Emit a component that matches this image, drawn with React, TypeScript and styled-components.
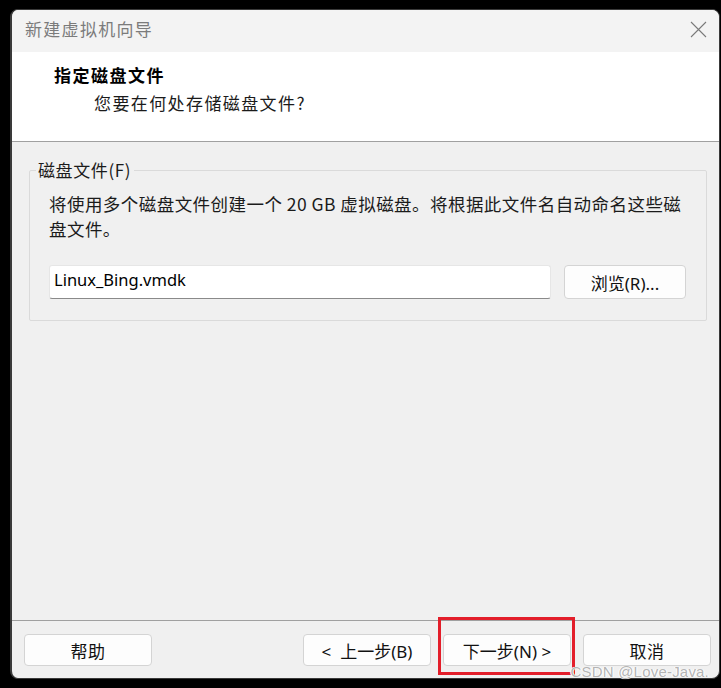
import React from "react";
import styled, { createGlobalStyle } from "styled-components";

const Global = createGlobalStyle`
  html, body { margin: 0; padding: 0; background: #000; }
  body {
    width: 721px; height: 688px; overflow: hidden;
    font-family: "Segoe UI", "Noto Sans", "Noto Sans CJK SC", sans-serif;
    color: #1b1b1b;
  }
`;

const Page = styled.div`
  position: relative;
  width: 721px;
  height: 688px;
  box-sizing: border-box;
  padding: 9px 1px 9px 10px;
  display: flex;
  background: #000;
`;

const Window = styled.div`
  flex: 1;
  display: flex;
  flex-direction: column;
  border: 1px solid #3a3a3a;
  border-left-width: 2px;
  border-radius: 8px;
  overflow: hidden;
  background: #f0f0f0;
`;

const TitleBar = styled.div`
  height: 42px;
  flex: none;
  box-sizing: border-box;
  display: flex;
  align-items: center;
  justify-content: space-between;
  padding: 0 12px 5px 13px;
  background: #f3f3f3;
`;

const TitleText = styled.span`
  font-family: "Noto Sans CJK SC", sans-serif;
  font-size: 17px;
  color: #7b7b7b;
  letter-spacing: 1.3px;
`;

const CloseIcon = styled.svg`
  width: 17px;
  height: 17px;
  margin-top: 2px;
`;

const Header = styled.div`
  flex: none;
  height: 90px;
  box-sizing: border-box;
  padding: 11px 0 0 42px;
  background: #fff;
  border-bottom: 1px solid #a0a0a0;
  display: flex;
  flex-direction: column;
  gap: 4px;
`;

const HeaderTitle = styled.div`
  font-family: "Noto Sans CJK SC", sans-serif;
  font-weight: 700;
  font-size: 17px;
  line-height: 24px;
  color: #000;
  letter-spacing: 1.5px;
`;

const HeaderSub = styled.div`
  font-family: "Noto Sans CJK SC", sans-serif;
  font-size: 17px;
  line-height: 24px;
  padding-left: 40px;
  color: #1b1b1b;
  letter-spacing: 1.4px;
`;

const Body = styled.div`
  flex: 1;
  padding: 16px 12px 0 17px;
`;

const Group = styled.fieldset`
  margin: 0;
  padding: 0;
  border: 1px solid #dadada;
  border-radius: 2px;
  min-width: 0;
`;

const Legend = styled.legend`
  margin-left: 6px;
  padding: 0 3px 0 2px;
  font-size: 17px;
  line-height: 24px;
  color: #1b1b1b;
  font-family: "Noto Sans CJK SC", sans-serif;
  letter-spacing: 0.6px;
`;

const GroupInner = styled.div`
  padding: 9px 20px 21px 19px;
`;

const Desc = styled.p`
  margin: 0;
  font-family: "Noto Sans CJK SC", sans-serif;
  font-size: 17.5px;
  line-height: 25px;
  color: #1b1b1b;
  letter-spacing: 0.45px;
`;

const FileRow = styled.div`
  margin-top: 24px;
  display: flex;
  gap: 13px;
`;

const FileInput = styled.div`
  flex: 1;
  height: 34px;
  box-sizing: border-box;
  background: #fff;
  border: 1px solid #e6e6e6;
  border-bottom: 1px solid #8a8a8a;
  border-radius: 3px;
  padding: 0 4px 6px;
  display: flex;
  align-items: center;
  font-family: "Noto Sans", sans-serif;
  font-size: 16.5px;
  color: #000;
`;

const Button = styled.div<{ $w?: number }>`
  width: ${(p) => p.$w ?? 128}px;
  height: ${(p) => (p.$w ? 34 : 32)}px;
  box-sizing: border-box;
  background: #fdfdfd;
  border: 1px solid #d4d4d4;
  border-radius: 4px;
  display: flex;
  align-items: center;
  justify-content: center;
  font-family: "Noto Sans", "Noto Sans CJK SC", sans-serif;
  font-size: 17px;
  color: #111;
  flex: none;
`;

const Cjk = styled.span`
  font-family: "Noto Sans CJK SC", sans-serif;
  letter-spacing: 0.5px;
`;

const Footer = styled.div`
  flex: none;
  height: 58px;
  box-sizing: border-box;
  border-top: 1px solid #a0a0a0;
  padding: 13px 8px 0 12px;
  display: flex;
  align-items: flex-start;
  gap: 12px;
`;

const Spacer = styled.div`
  flex: 1;
`;

const Highlight = styled.div`
  position: relative;
`;

const RedBox = styled.span`
  position: absolute;
  top: -17px;
  left: -5px;
  right: -4px;
  bottom: -9px;
  border: 3px solid #e31e2a;
  pointer-events: none;
`;

const Watermark = styled.span`
  position: absolute;
  right: 12px;
  bottom: 8px;
  font-family: "Liberation Sans", Arial, sans-serif;
  font-size: 15px;
  color: #b4b4b4;
  letter-spacing: 0.2px;
  text-shadow: 0 0 1px #fff, 1px 0 0 #fff, -1px 0 0 #fff;
`;

export default function App() {
  return (
    <Page>
      <Global />
      <Window>
        <TitleBar>
          <TitleText>新建虚拟机向导</TitleText>
          <CloseIcon viewBox="0 0 17 17">
            <path d="M1 1 L16 16 M16 1 L1 16" stroke="#7a7a7a" strokeWidth="1.1" fill="none" />
          </CloseIcon>
        </TitleBar>
        <Header>
          <HeaderTitle>指定磁盘文件</HeaderTitle>
          <HeaderSub>您要在何处存储磁盘文件?</HeaderSub>
        </Header>
        <Body>
          <Group>
            <Legend>磁盘文件(F)</Legend>
            <GroupInner>
              <Desc>
                将使用多个磁盘文件创建一个 20 GB 虚拟磁盘。将根据此文件名自动命名这些磁盘文件。
              </Desc>
              <FileRow>
                <FileInput>Linux_Bing.vmdk</FileInput>
                <Button $w={122}>浏览(R)...</Button>
              </FileRow>
            </GroupInner>
          </Group>
        </Body>
        <Footer>
          <Button>
            <Cjk>帮助</Cjk>
          </Button>
          <Spacer />
          <Button>&lt;&nbsp; 上一步(B)</Button>
          <Highlight>
            <Button>下一步(N) &gt;</Button>
            <RedBox />
          </Highlight>
          <Button>
            <Cjk>取消</Cjk>
          </Button>
        </Footer>
      </Window>
      <Watermark>CSDN @Love-Java.</Watermark>
    </Page>
  );
}
